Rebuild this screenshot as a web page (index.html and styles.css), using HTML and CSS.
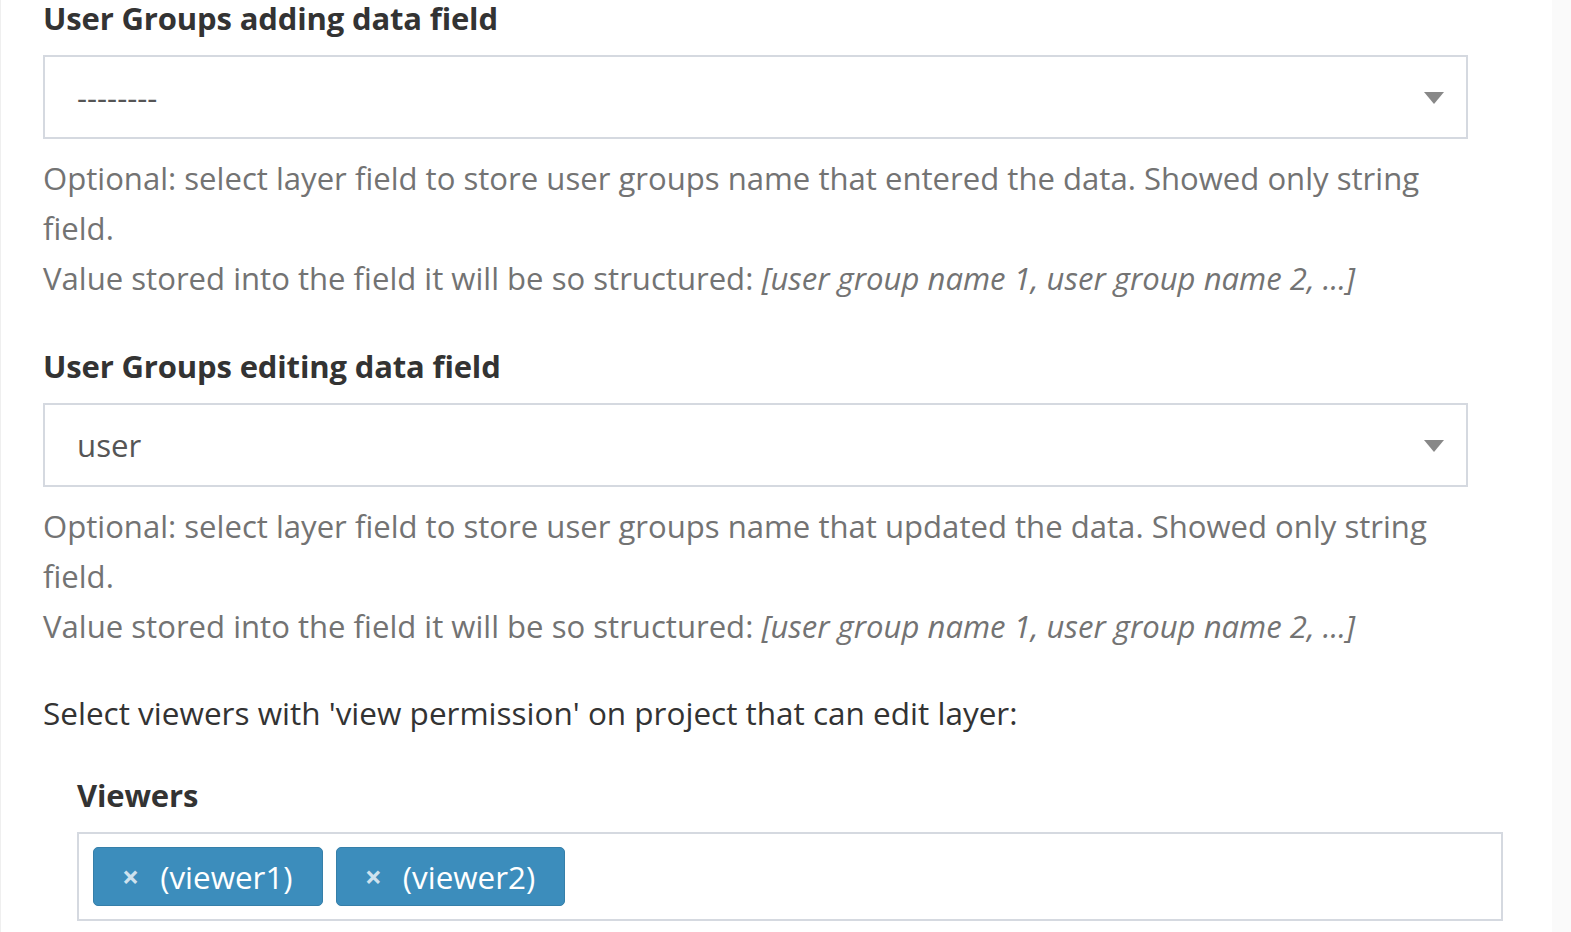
FILE: index.html
```html
<!DOCTYPE html>
<html>
<head>
<meta charset="utf-8">
<link rel="stylesheet" href="styles.css">
</head>
<body>
<div class="page">
  <main class="content">
    <div class="form-group">
      <label class="field-label">User Groups adding data field</label>
      <div class="select"><span class="select-value">--------</span><span class="caret"></span></div>
      <p class="help">Optional: select layer field to store user groups name that entered the data. Showed only string field.<br>Value stored into the field it will be so structured: <em>[user group name 1, user group name 2, ...]</em></p>
    </div>
    <div class="form-group second">
      <label class="field-label">User Groups editing data field</label>
      <div class="select"><span class="select-value">user</span><span class="caret"></span></div>
      <p class="help">Optional: select layer field to store user groups name that updated the data. Showed only string field.<br>Value stored into the field it will be so structured: <em>[user group name 1, user group name 2, ...]</em></p>
    </div>
    <p class="intro">Select viewers with 'view permission' on project that can edit layer:</p>
    <div class="viewers">
      <label class="field-label">Viewers</label>
      <div class="multi">
        <span class="tag"><span class="tag-x">×</span>(viewer1)</span>
        <span class="tag"><span class="tag-x">×</span>(viewer2)</span>
      </div>
    </div>
  </main>
  <aside class="strip"></aside>
</div>
</body>
</html>
```

FILE: styles.css
```css
html, body {
  margin: 0;
  padding: 0;
  background: #ffffff;
}

body {
  font-family: "Open Sans", "Liberation Sans", sans-serif;
  color: #333333;
  overflow: hidden;
  height: 932px;
}

.page {
  display: flex;
  height: 932px;
}

.content {
  flex: 0 0 1552px;
  box-sizing: border-box;
  border-left: 1px solid #efefef;
  padding-left: 42px;
  background: #ffffff;
}

.strip {
  flex: 1;
  background: #fafafa;
}

.field-label {
  display: block;
  font-weight: 700;
  font-size: 31px;
  line-height: 36px;
  color: #333333;
  letter-spacing: -0.15px;
}

.select {
  margin-top: 19px;
  width: 1425px;
  height: 84px;
  box-sizing: border-box;
  border: 2px solid #d5d9e0;
  display: flex;
  align-items: center;
  justify-content: space-between;
  padding: 0 22px 0 32px;
  font-size: 31.2px;
  color: #555555;
}

.caret {
  width: 0;
  height: 0;
  border-left: 10px solid transparent;
  border-right: 10px solid transparent;
  border-top: 12px solid #888888;
  margin-top: 2px;
}

.help {
  margin: 14px 0 0 0;
  width: 1425px;
  font-size: 31.1px;
  line-height: 50px;
  color: #737373;
}

.help em {
  font-style: italic;
}

.second {
  margin-top: 45px;
}

.intro {
  margin: 44px 0 0 0;
  font-size: 31.5px;
  line-height: 36px;
  color: #333333;
}

.viewers {
  margin-top: 46px;
  margin-left: 34px;
}

.multi {
  margin-top: 19px;
  width: 1426px;
  height: 89px;
  box-sizing: border-box;
  border: 2px solid #d5d9e0;
  padding: 13px 14px;
  display: flex;
  gap: 13px;
}

.tag {
  display: flex;
  align-items: center;
  height: 59px;
  box-sizing: border-box;
  padding: 0 29px 0 28px;
  background: #3c8dbc;
  border: 1px solid #367fa9;
  border-radius: 5px;
  color: #ffffff;
  font-size: 31.4px;
}

.tag-x {
  color: rgba(255, 255, 255, 0.75);
  font-weight: 700;
  font-size: 30px;
  margin-right: 21px;
}
```
